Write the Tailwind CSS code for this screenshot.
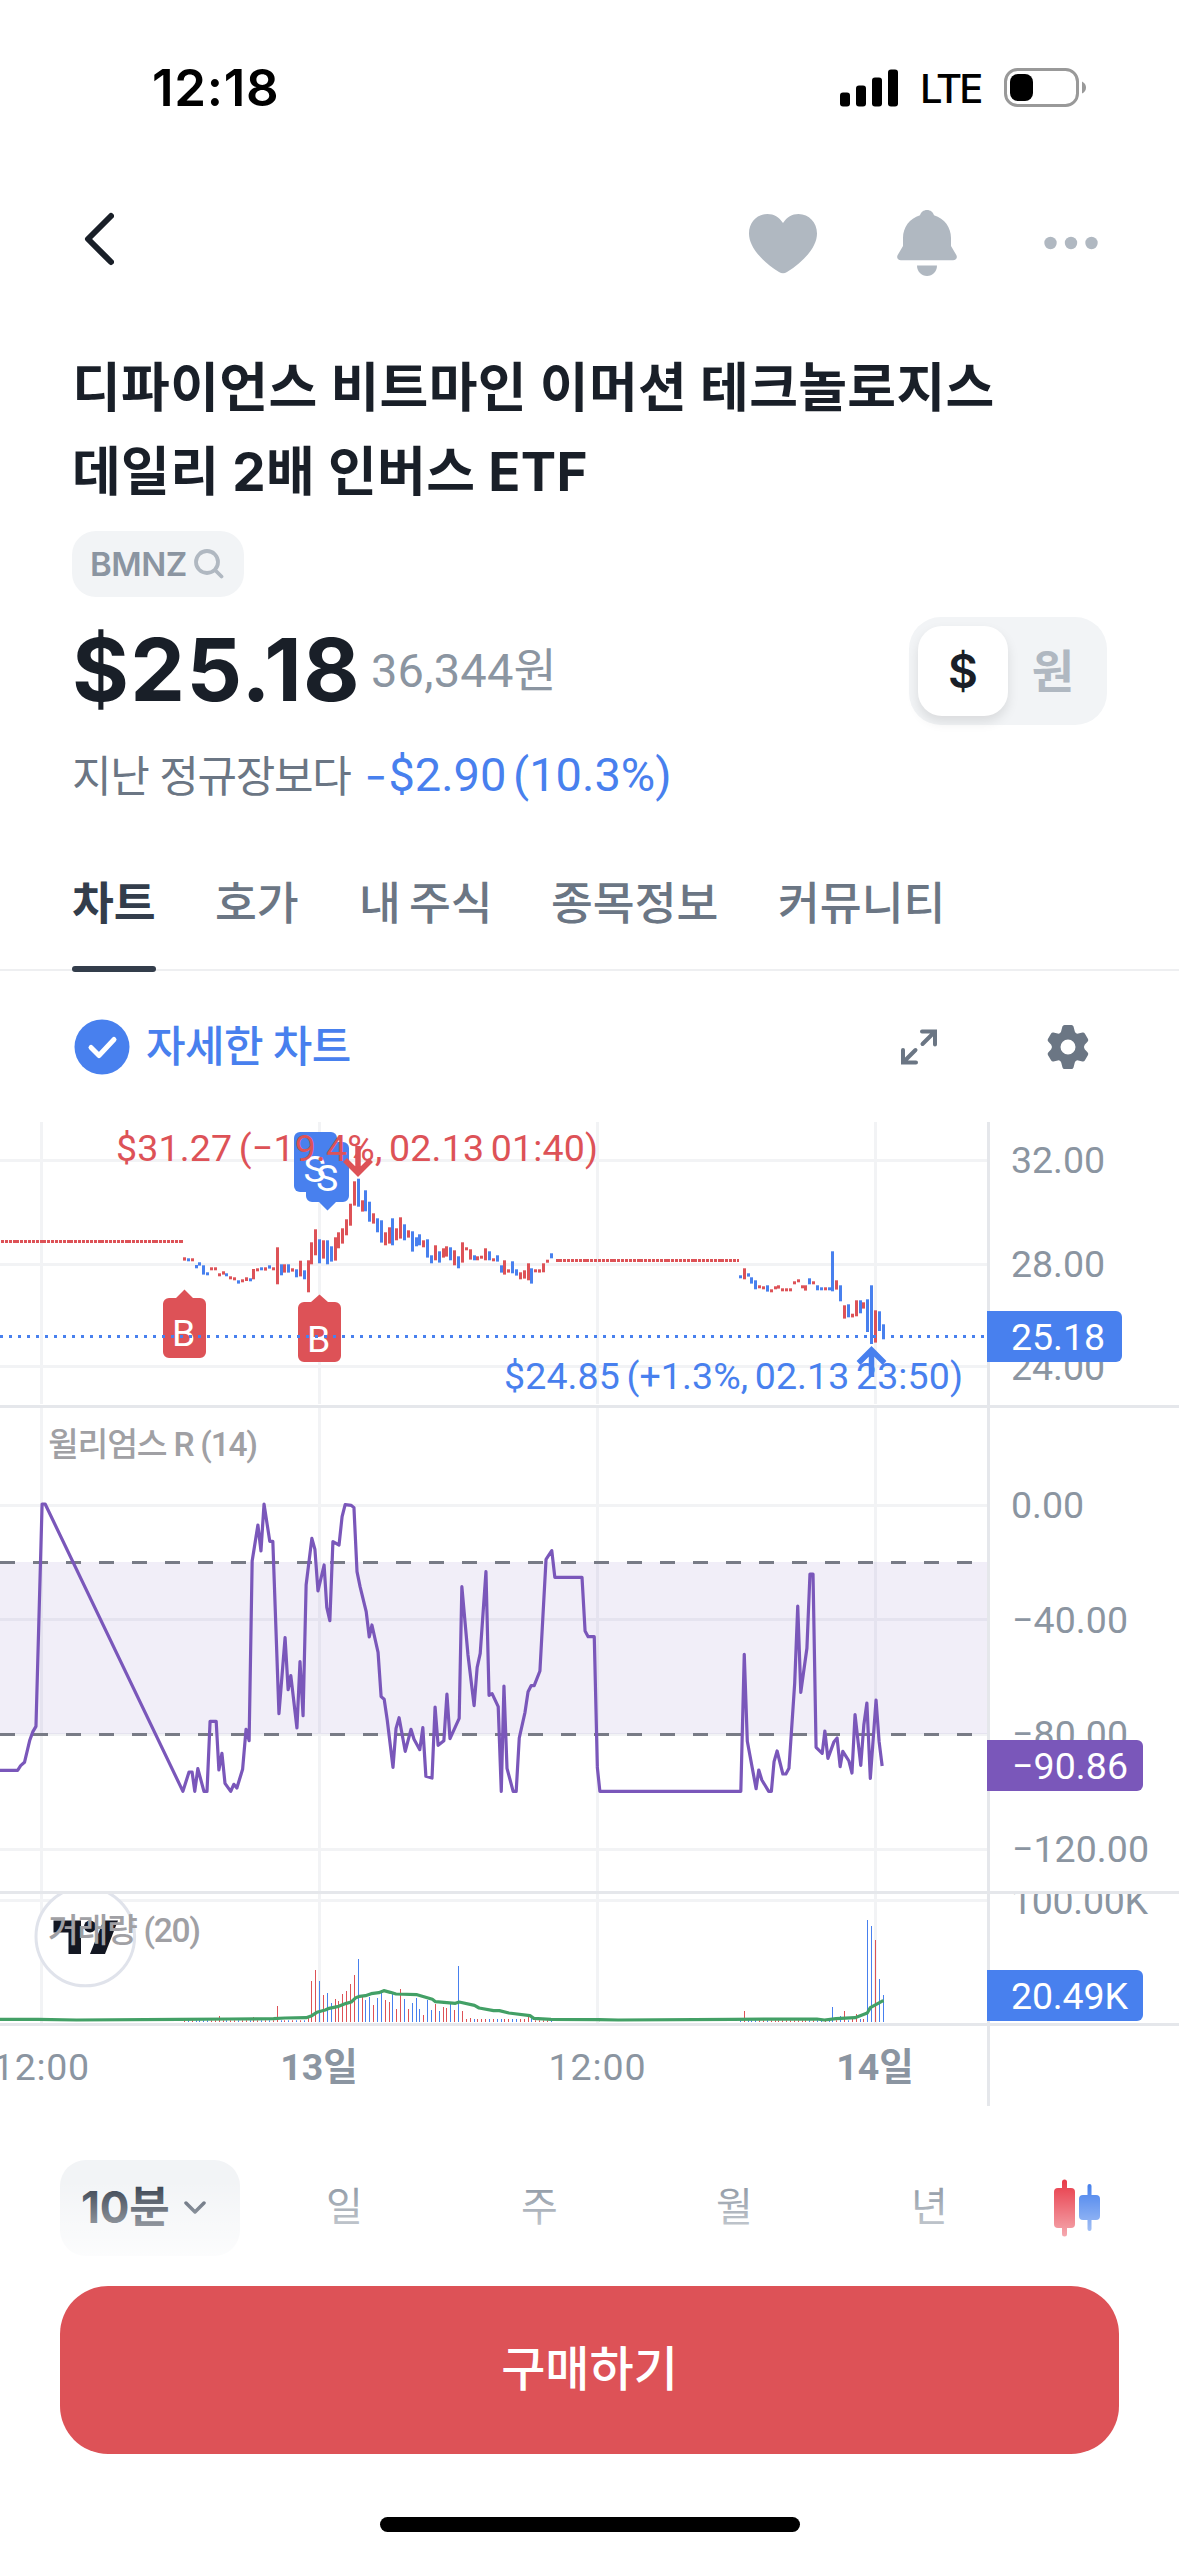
<!DOCTYPE html>
<html lang="ko">
<head>
  <meta charset="UTF-8" />
  <meta name="viewport" content="width=device-width, initial-scale=1.0" />
  <title>BMNZ - 차트</title>
  <script src="https://cdn.jsdelivr.net/npm/@tailwindcss/browser@4"></script>
  <style>
    body {
      font-family: Inter, 'Noto Sans CJK KR', sans-serif;
    }
    .num {
      font-family: Roboto, 'Noto Sans CJK KR', sans-serif;
    }
  </style>
</head>
<body class="bg-white w-[1179px] h-[2556px] overflow-hidden flex flex-col text-[#191f28] whitespace-nowrap">

  <!-- Status bar -->
  <div class="h-[160px] shrink-0 flex justify-between pl-[152px] pr-[93px] pt-[58px] text-black">
    <span class="text-[51px] leading-[60px] font-semibold tracking-[0.7px]">12:18</span>
    <div class="flex items-center h-[60px]">
      <svg class="w-[58px] h-[38px]" viewBox="0 0 58 38">
        <rect x="0" y="23.5" width="10" height="14" rx="3" />
        <rect x="16" y="16.5" width="10" height="21" rx="3" />
        <rect x="32" y="8.500" width="10" height="29" rx="3" />
        <rect x="48" y="0.500" width="10" height="37" rx="3" />
      </svg>
      <span class="ml-[22px] w-[84px] pt-[2px] text-[40px] leading-[60px] font-medium tracking-[-2.9px]">LTE</span>
      <svg class="w-[82px] h-[40px]" viewBox="0 0 82 40">
        <rect x="1.500" y="1.500" width="72" height="36" rx="12" fill="none" stroke="#999" stroke-width="3" />
        <rect x="6" y="6" width="23" height="27" rx="8" />
        <path d="M78 13.500q4 2 4 6t-4 6z" fill="#999" />
      </svg>
    </div>
  </div>

  <!-- Nav bar -->
  <header class="h-[160px] shrink-0 flex items-start justify-between pl-[84px] pr-[81px] pt-[50px]">
    <svg class="w-[30px] h-[56px] mt-[1px]" viewBox="0 0 30 56" fill="none" stroke="#191f28" stroke-width="6" stroke-linecap="round" stroke-linejoin="round">
      <path d="M27 5L4 28l23 23" />
    </svg>
    <div class="flex text-[#b0b8c1]">
      <svg class="w-[68px] h-[60px] mt-[4px]" viewBox="0 0 68 60" fill="currentColor">
        <path d="M34 9C30 3 25 0 18.500 0C8 0 0 8.500 0 19.500C0 33 13 47.500 30 58q4 2.400 8 0C55 47.500 68 33 68 19.500C68 8.500 60 0 49.500 0C43 0 38 3 34 9z" />
      </svg>
      <svg class="w-[60px] h-[67px] ml-[80px]" viewBox="0 0 60 67" fill="currentColor">
        <path d="M30 0c3.500 0 6.200 2.200 7 5.300C47.500 8.500 54 17.500 54 28v8l5 8.500c2 3.200.3 5.800-3 5.800H4c-3.300 0-5-2.600-3-5.800L6 36v-8C6 17.500 12.500 8.500 23 5.300C23.800 2.200 26.500 0 30 0z" />
        <path d="M20 55.500h20c0 6-4.500 10.500-10 10.500s-10-4.500-10-10.500z" />
      </svg>
      <svg class="w-[54px] h-[14px] ml-[87px] mt-[26px]" viewBox="0 0 54 14" fill="currentColor">
        <circle cx="6.500" cy="7" r="6.200" />
        <circle cx="27" cy="7" r="6.200" />
        <circle cx="47.500" cy="7" r="6.200" />
      </svg>
    </div>
  </header>

  <!-- Stock summary -->
  <section class="h-[540px] shrink-0 pl-[72px] pr-[72px] pt-[26px]">
    <h1 class="h-[168px] text-[53px] leading-[84px] font-bold tracking-[0.35px]">디파이언스 비트마인 이머션 테크놀로지스<br />데일리 2배 인버스 ETF</h1>

    <div class="mt-[17px] w-[172px] h-[66px] rounded-[24px] bg-[#f2f4f6] flex items-center pl-[18px]">
      <span class="w-[104px] text-[33px] leading-[40px] font-semibold text-[#8b95a1] tracking-[-0.5px]">BMNZ</span>
      <svg class="w-[30px] h-[30px]" viewBox="0 0 30 30" fill="none" stroke="#b0b8c1" stroke-width="3.800" stroke-linecap="round">
        <circle cx="13" cy="13" r="11" />
        <path d="M21.500 21.500l6 6" />
      </svg>
    </div>

    <div class="mt-[20px] h-[108px] flex items-center justify-between">
      <div class="flex items-center">
        <span class="w-[299px] pb-[3px] text-[87px] leading-[108px] font-bold tracking-[1.4px]">$25.18</span>
        <span class="num text-[47px] leading-[60px] text-[#8b95a1] tracking-[0.2px]">36,344원</span>
      </div>
      <div class="w-[198px] h-[108px] rounded-[32px] bg-[#f2f4f6] p-[9px] flex items-center">
        <div class="w-[90px] h-[90px] rounded-[24px] bg-white shadow-[0_6px_12px_rgba(0,0,0,0.1)] flex items-center justify-center text-[46px] font-semibold">$</div>
        <div class="flex-1 text-center text-[46px] leading-[60px] font-bold text-[#b0b8c1]">원</div>
      </div>
    </div>

    <p class="mt-[20px] flex items-center h-[62px] text-[43px] leading-[62px] text-[#6b7684]">
      <span class="w-[293px] tracking-[-1.3px]">지난 정규장보다</span>
      <span class="num text-[47px] text-[#4880ee] [word-spacing:-5px]"><span class="text-[38px] font-medium mr-[2px]">−</span>$2.90 (10.3%)</span>
    </p>
  </section>

  <!-- Tabs -->
  <nav class="h-[111px] shrink-0 border-b-[2px] border-[#eeeff1] flex pl-[72px] text-[45.5px] leading-[88px] font-medium text-[#6b7684]">
    <a class="relative w-[143px] font-bold text-[#333d4b]">차트<span class="absolute left-0 top-[106px] w-[84px] h-[6px] rounded-[3px] bg-[#333d4b]"></span></a>
    <a class="w-[144px]">호가</a>
    <a class="w-[192px] [word-spacing:-4px]">내 주식</a>
    <a class="w-[227px]">종목정보</a>
    <a>커뮤니티</a>
  </nav>

  <!-- Chart toolbar -->
  <div class="h-[151px] shrink-0 flex items-center pl-[74px] pr-[90px]">
    <svg class="w-[56px] h-[56px]" viewBox="0 0 56 56">
      <circle cx="28" cy="28" r="27.500" fill="#4880ee" />
      <path d="M17 28.500l8 8 15-16" fill="none" stroke="#fff" stroke-width="5" stroke-linecap="round" stroke-linejoin="round" />
    </svg>
    <span class="ml-[16px] pb-[2px] text-[43px] leading-[60px] font-medium text-[#4880ee] tracking-[-0.6px] [word-spacing:-1px]">자세한 차트</span>
    <svg class="w-[38px] h-[38px] ml-auto" viewBox="0 0 38 38" fill="none" stroke="#6b7684" stroke-width="4" stroke-linecap="round" stroke-linejoin="miter">
      <path d="M22 3.500h13v13M34 4.500L22.500 16M3 22v12.500h13M4 33.500l11.500-11.500" />
    </svg>
    <svg class="w-[42px] h-[44px] ml-[109px]" viewBox="0 0 42 44" fill="#6b7684" fill-rule="evenodd">
      <path d="M17.500 0h7q1.500 0 2 1.500l1.300 5q.6 2 2.400 2.200l5.300-1.200q1.500-.3 2.300 1l3.200 5.500q.7 1.300-.3 2.400l-3 3.300q-1.600 2.300 0 4.600l3 3.300q1 1.100.3 2.400l-3.200 5.500q-.8 1.300-2.300 1l-5.300-1.200q-1.800.2-2.400 2.200l-1.300 5q-.5 1.500-2 1.500h-7q-1.500 0-2-1.500l-1.300-5q-.6-2-2.400-2.200l-5.300 1.200q-1.500.3-2.300-1L.9 30q-.7-1.300.3-2.400l3-3.300q1.600-2.300 0-4.600l-3-3.300Q.2 15.300.9 14l3.200-5.500q.8-1.300 2.300-1l5.300 1.200q1.800-.2 2.400-2.200l1.300-5Q16 0 17.500 0zM21 14.500a7.500 7.500 0 1 0 0 15a7.500 7.500 0 1 0 0-15z" />
    </svg>
  </div>

  <!-- Chart -->
  <svg class="num w-[1179px] h-[984px] shrink-0" viewBox="0 1122 1179 984" font-size="37.500" fill="#8b95a1">
    <g stroke="#f2f3f5" stroke-width="3">
      <path d="M41.500 1122V1404M319.500 1122V1404M597.500 1122V1404M875.500 1122V1404" />
      <path d="M41.500 1408V2023M319.500 1408V2023M597.500 1408V2023M875.500 1408V2023" />
      <path d="M0 1160.500H987M0 1264.500H987M0 1366.500H987M0 1505.500H987M0 1619.500H987M0 1734.500H987M0 1849.500H987M0 1900.500H987" />
    </g>
    <rect x="0" y="1562" width="987" height="172" fill="#7a57ba" fill-opacity="0.1" />
    <g stroke="#e5e7eb" stroke-width="3">
      <path d="M988.500 1122V2106M0 1406.500H1179M0 1892.500H1179M0 2024.500H1179" />
    </g>
    <path d="M0 1562.500H987M0 1734.500H987" stroke="#787b86" stroke-width="3" stroke-dasharray="15 18" />

    <!-- Axis labels -->
    <text x="1011" y="1172.500" textLength="94">32.00</text>
    <text x="1011" y="1276.500" textLength="94">28.00</text>
    <text x="1011" y="1379.500" textLength="94">24.00</text>
    <text x="1011" y="1517.500" textLength="73">0.00</text>
    <text x="1012" y="1632.500" textLength="116">−40.00</text>
    <text x="1012" y="1747" textLength="116">−80.00</text>
    <text x="1012" y="1862" textLength="137">−120.00</text>
    <clipPath id="volPane"><rect x="0" y="1894" width="1179" height="130" /></clipPath>
    <text x="1011" y="1913.500" textLength="137" clip-path="url(#volPane)">100.00K</text>
    <text x="-7" y="2080" textLength="96">12:00</text>
    <text x="319" y="2080" text-anchor="middle" font-weight="700">13일</text>
    <text x="548.500" y="2080" textLength="97">12:00</text>
    <text x="875" y="2080" text-anchor="middle" font-weight="700">14일</text>

    <!-- Price pane -->
    <path d="M1 1241.500H182.500M555.500 1260.500H738.500" stroke="#dd5257" stroke-width="3" stroke-dasharray="3 0.860" shape-rendering="crispEdges" />
    <g id="candles"></g>
    <g fill="#4880ee">
      <rect x="294" y="1132" width="43" height="60" rx="6" />
      <path d="M312 1142h31a6 6 0 0 1 6 6v48a6 6 0 0 1-6 6h-7l-8.500 8.500-8.500-8.500h-7a6 6 0 0 1-6-6v-48a6 6 0 0 1 6-6z" />
      <text x="303.500" y="1181.500" fill="#fff">S</text>
      <text x="316" y="1191" fill="#fff">S</text>
    </g>
    <g fill="#dd5257">
      <path d="M169 1298h7l8.500-8.500 8.500 8.500h7a6 6 0 0 1 6 6v48a6 6 0 0 1-6 6h-31a6 6 0 0 1-6-6v-48a6 6 0 0 1 6-6z" />
      <path d="M304 1302h7l8.500-7.500 8.500 7.500h7a6 6 0 0 1 6 6v48a6 6 0 0 1-6 6h-31a6 6 0 0 1-6-6v-48a6 6 0 0 1 6-6z" />
      <text x="172" y="1346" fill="#fff">B</text>
      <text x="307" y="1352" fill="#fff">B</text>
      <text class="[word-spacing:-3px]" x="116" y="1161" textLength="482">$31.27 (−19.4%, 02.13 01:40)</text>
    </g>
    <path d="M358 1146v26M345 1160l13 13 13-13" fill="none" stroke="#dd5257" stroke-width="5.500" />
    <path d="M0 1336.500H987" stroke="#4880ee" stroke-width="3" stroke-dasharray="3 6" />
    <text class="[word-spacing:-3px]" x="504" y="1389" textLength="459" fill="#4880ee">$24.85 (+1.3%, 02.13 23:50)</text>
    <path d="M871.500 1377v-26M858.500 1363l13-13 13 13" fill="none" stroke="#4880ee" stroke-width="5.500" />

    <!-- Williams %R pane -->
    <text x="48" y="1456" font-size="33.500" font-weight="500" fill="#a0a0a4" textLength="210">윌리엄스 R (14)</text>
    <g fill="none" stroke="#7a57ba" stroke-width="3.200" stroke-linejoin="round">
      <polyline vector-effect="non-scaling-stroke" transform="translate(0 1400) scale(.38265 .33333)" points="0,1111 46,1111 54,1097 64,1087 78,1020 86,995 94,979 110,312 118,312 478,1174 494,1116 502,1116 509,1174 517,1106 533,1174 541,1174 549,964 565,964 572,1110 580,1060 588,1150 603,1174 611,1153 619,1164 634,1108 643,988 651,1022 659,483 674,375 682,453 690,312 705,424 713,424 729,941 745,713 753,869 760,827 776,984 784,785 792,947 800,555 815,415 823,448 831,573 847,495 854,622 862,662 870,425 886,435 894,350 902,314 918,316 925,323 933,515 941,560 957,635 965,711 972,675 988,757 996,890 1004,898 1012,960 1027,1102 1035,985 1043,953 1059,1054 1074,988 1082,1018 1097,1049 1105,983 1113,1129 1129,1134 1137,921 1145,1036 1160,1022 1168,882 1176,1016 1200,955 1207,560 1223,765 1239,917 1247,802 1255,760 1270,515 1278,886 1286,881 1302,920 1310,1174 1317,858 1325,1105 1341,1174 1349,1174 1357,1014 1372,937 1380,875 1388,857 1396,857 1411,813 1427,478 1442,452 1450,532 1521,532 1529,693 1537,710 1553,710 1561,1098" />
      <polyline vector-effect="non-scaling-stroke" transform="translate(580 1400) scale(.382 .33333)" points="45,1098 52,1174 421,1174 430,763 438,1024 461,1166 468,1110 476,1140 494,1174 501,1174 508,1085 516,1053 531,1122 539,1122 547,1105 562,850 570,618 578,877 594,745 602,522 610,522 618,1042 634,1060 641,993 649,1075 665,1025 673,1014 681,1100 688,1054 704,1083 712,1119 720,944 735,1096 743,975 751,909 760,1135 775,900 783,1025 791,1098" />
    </g>

    <!-- Volume pane -->
    <g clip-path="url(#volPane)">
      <circle cx="85.300" cy="1936.500" r="49.300" fill="#fff" stroke="#e0e3eb" stroke-width="3" />
      <g fill="#131722">
        <path d="M53.500 1920.500h27.500v33.500h-12.500v-21.500h-15z" />
        <circle cx="90" cy="1926.500" r="6" />
        <path d="M103.500 1920.500h14.500l-13 33.500h-15z" />
      </g>
    </g>
    <text x="48" y="1942" font-size="33.500" font-weight="500" fill="#a0a0a4" textLength="153">거래량 (20)</text>
    <g id="volume"></g>
    <g fill="none" stroke="#43a066" stroke-width="3.200" stroke-linejoin="round">
      <polyline vector-effect="non-scaling-stroke" transform="translate(0 1870) scale(.38265 .33333)" points="0,448 100,448 200,450 470,448 600,447 715,446 745,444 800,443 815,437 828,427 850,420 860,415 885,409 905,400 918,396 930,383 940,379 955,377 970,371 990,368 1003,362 1020,367 1035,372 1090,374 1110,381 1130,388 1138,395 1190,400 1200,396 1240,406 1252,414 1290,422 1305,422 1330,429 1385,437 1395,445 1440,448 1568,449" />
      <polyline vector-effect="non-scaling-stroke" transform="translate(580 1870) scale(.382 .33333)" points="50,449 100,450 400,448 620,447 640,450 670,446 720,443 752,429 760,413 790,394 795,392" />
    </g>

    <!-- Current value tags -->
    <g fill="#4880ee">
      <path d="M987 1311h129a6 6 0 0 1 6 6v39a6 6 0 0 1-6 6h-129z" />
      <path d="M987 1970h150a6 6 0 0 1 6 6v39a6 6 0 0 1-6 6h-150z" />
      <path d="M987 1740h150a6 6 0 0 1 6 6v39a6 6 0 0 1-6 6h-150z" fill="#7a57ba" />
    </g>
    <g fill="#fff">
      <text x="1011" y="1349.500" textLength="94">25.18</text>
      <text x="1012" y="1779" textLength="116">−90.86</text>
      <text x="1011" y="2008.500" textLength="117">20.49K</text>
    </g>
  </svg>

  <!-- Period selector -->
  <div class="relative h-[180px] shrink-0 flex items-start pl-[60px] pt-[54px] text-[40px] text-[#8b95a1]">
    <button class="w-[180px] h-[96px] rounded-[26px] bg-[#f2f4f6] flex items-center pl-[21px] text-[#333d4b]">
      <span class="w-[103px] pb-[3px] text-left text-[44px] font-bold tracking-[-0.2px]">10분</span>
      <svg class="w-[22px] h-[14px]" viewBox="0 0 22 14" fill="none" stroke="#4e5968" stroke-width="3.500" stroke-linecap="round" stroke-linejoin="round">
        <path d="M2 2l9 9 9-9" />
      </svg>
    </button>
    <div class="ml-[7px] flex h-[96px] pb-[2px] items-center text-center">
      <span class="w-[195px]">일</span>
      <span class="w-[195px]">주</span>
      <span class="w-[195px]">월</span>
      <span class="w-[195px]">년</span>
    </div>
    <svg class="w-[48px] h-[58px] ml-[27px] mt-[19px]" viewBox="0 0 48 58">
      <path d="M10.500 3v52" stroke="#e83a48" stroke-width="5" stroke-linecap="round" />
      <rect x="0" y="9" width="21" height="40" rx="4" fill="#e83a48" />
      <path d="M35.500 7v43" stroke="#3f7cec" stroke-width="4" stroke-linecap="round" />
      <rect x="25" y="16" width="21" height="25" rx="4" fill="#3f7cec" />
    </svg>
    <div class="absolute inset-x-0 top-[74px] h-[100px] bg-linear-to-b from-white/0 to-white"></div>
  </div>

  <!-- Buy button -->
  <button class="mx-[60px] h-[168px] shrink-0 rounded-[48px] bg-[#dd5257] pb-[3px] text-white text-[48px] font-medium">구매하기</button>

  <!-- Home indicator -->
  <div class="mt-[63px] mx-auto w-[420px] h-[15px] shrink-0 rounded-full bg-black"></div>

  <script>
    const SVG_NS = 'http://www.w3.org/2000/svg';
    const STEP = 3.86;
    const MIDNIGHT_X = 319.6;

    // one entry per 10 minute bar: direction, high, low (1/3 px from the pane's origin)
    const dayOne = 'r442,452 b445,454 r445,454 b465,475 b457,467 b466,494 b487,496 r472,481 r472,481 r490,499 r484,494 b490,499 r499,508 r502,511 b511,521 r508,517 r502,513 b505,514 r477,508 r475,484 b472,481 r472,482 b466,476 r472,481 r412,523 b463,496 r463,488 b463,488 r475,485 b478,502 r452,499 b481,508 r451,547 r397,463 r358,436 b388,460 r391,446 b391,463 b409,455 r382,452 r367,415 r355,401 r328,376 r281,347 r214,287 b206,290 r271,305 b241,304 b275,335 r310,341 b325,367 b331,398 r367,406 r352,401 b325,406 r355,391 r322,386 b343,391 r361,383 b364,425 b382,409 b373,406 r391,412 b388,443 b436,460 r406,451 b424,458 r415,443 r409,440 b412,451 r421,466 b439,475 r397,458 r412,421 r418,449 b436,451 r439,451 r437,446 r415,451 b424,451 r445,454 b436,455 b466,488 r451,494 r478,488 b454,490 b478,497 r487,508 r481,506 r460,511 b475,521 r478,487 r478,488 r460,487 r449,458 b430,445';
    const dayTwo = 'b496,505 r475,508 b490,500 b502,521 b511,538 r526,535 r529,538 b526,545 r538,547 r529,538 r526,536 r535,544 r535,544 r535,544 r514,523 r508,517 r526,535 r526,542 b505,523 r514,523 b526,541 b532,541 r532,541 b532,541 b424,544 r511,539 b526,574 r586,626 b583,622 r611,622 r571,619 b571,610 r577,596 b568,666 b526,702 r601,698 b604,663 b643,688';

    // volume bar heights in 1/3 px, everything not listed is close to zero
    const volumes = {
      '-26': 18, '-17': 15, '-11': 48, '-3': 12, '-2': 123, '-1': 156,
      0: 123, 1: 81, 2: 87, 3: 57, 4: 69, 5: 63, 6: 84, 7: 93, 8: 114, 9: 141, 10: 189,
      11: 75, 12: 66, 13: 75, 14: 51, 15: 72, 16: 90, 17: 66, 18: 60, 19: 84, 20: 39,
      21: 99, 22: 69, 23: 39, 24: 57, 25: 72, 26: 39, 27: 21, 28: 66, 29: 36, 30: 54,
      31: 33, 32: 45, 33: 42, 34: 57, 35: 36, 36: 168, 37: 33, 38: 9, 39: 12, 40: 9,
      41: 9, 42: 9, 43: 9, 44: 9, 45: 9, 46: 9, 47: 9, 48: 9, 49: 9, 50: 9, 51: 9,
      52: 9, 53: 9, 54: 15, 55: 11, 110: 33, 133: 45, 135: 18, 136: 33, 138: 9, 139: 24,
      140: 9, 141: 9, 142: 306, 143: 288, 144: 246, 145: 129, 146: 81
    };

    function addBar(parent, x, y, width, height, color) {
      const rect = document.createElementNS(SVG_NS, 'rect');
      rect.setAttribute('x', x);
      rect.setAttribute('y', y.toFixed(1));
      rect.setAttribute('width', width);
      rect.setAttribute('height', height.toFixed(1));
      rect.setAttribute('fill', color);
      parent.appendChild(rect);
    }

    function drawBars(bars, firstIndex) {
      const candles = document.getElementById('candles');
      const volume = document.getElementById('volume');
      bars.split(' ').forEach((bar, n) => {
        const i = firstIndex + n;
        // snap to whole pixels so that the thin bars stay crisp
        const x = Math.floor(MIDNIGHT_X + i * STEP);
        const color = bar[0] === 'r' ? '#dd5257' : '#4880ee';
        const [high, low] = bar.slice(1).split(',').map(Number);
        addBar(candles, x - 1, 1110 + high / 3, 3, (low - high) / 3, color);
        const h = (volumes[i] || 5) / 3;
        addBar(volume, x, 2022 - h, 1, h, color);
      });
    }

    drawBars(dayOne, -35);
    drawBars(dayTwo, 109);
  </script>

</body>
</html>
